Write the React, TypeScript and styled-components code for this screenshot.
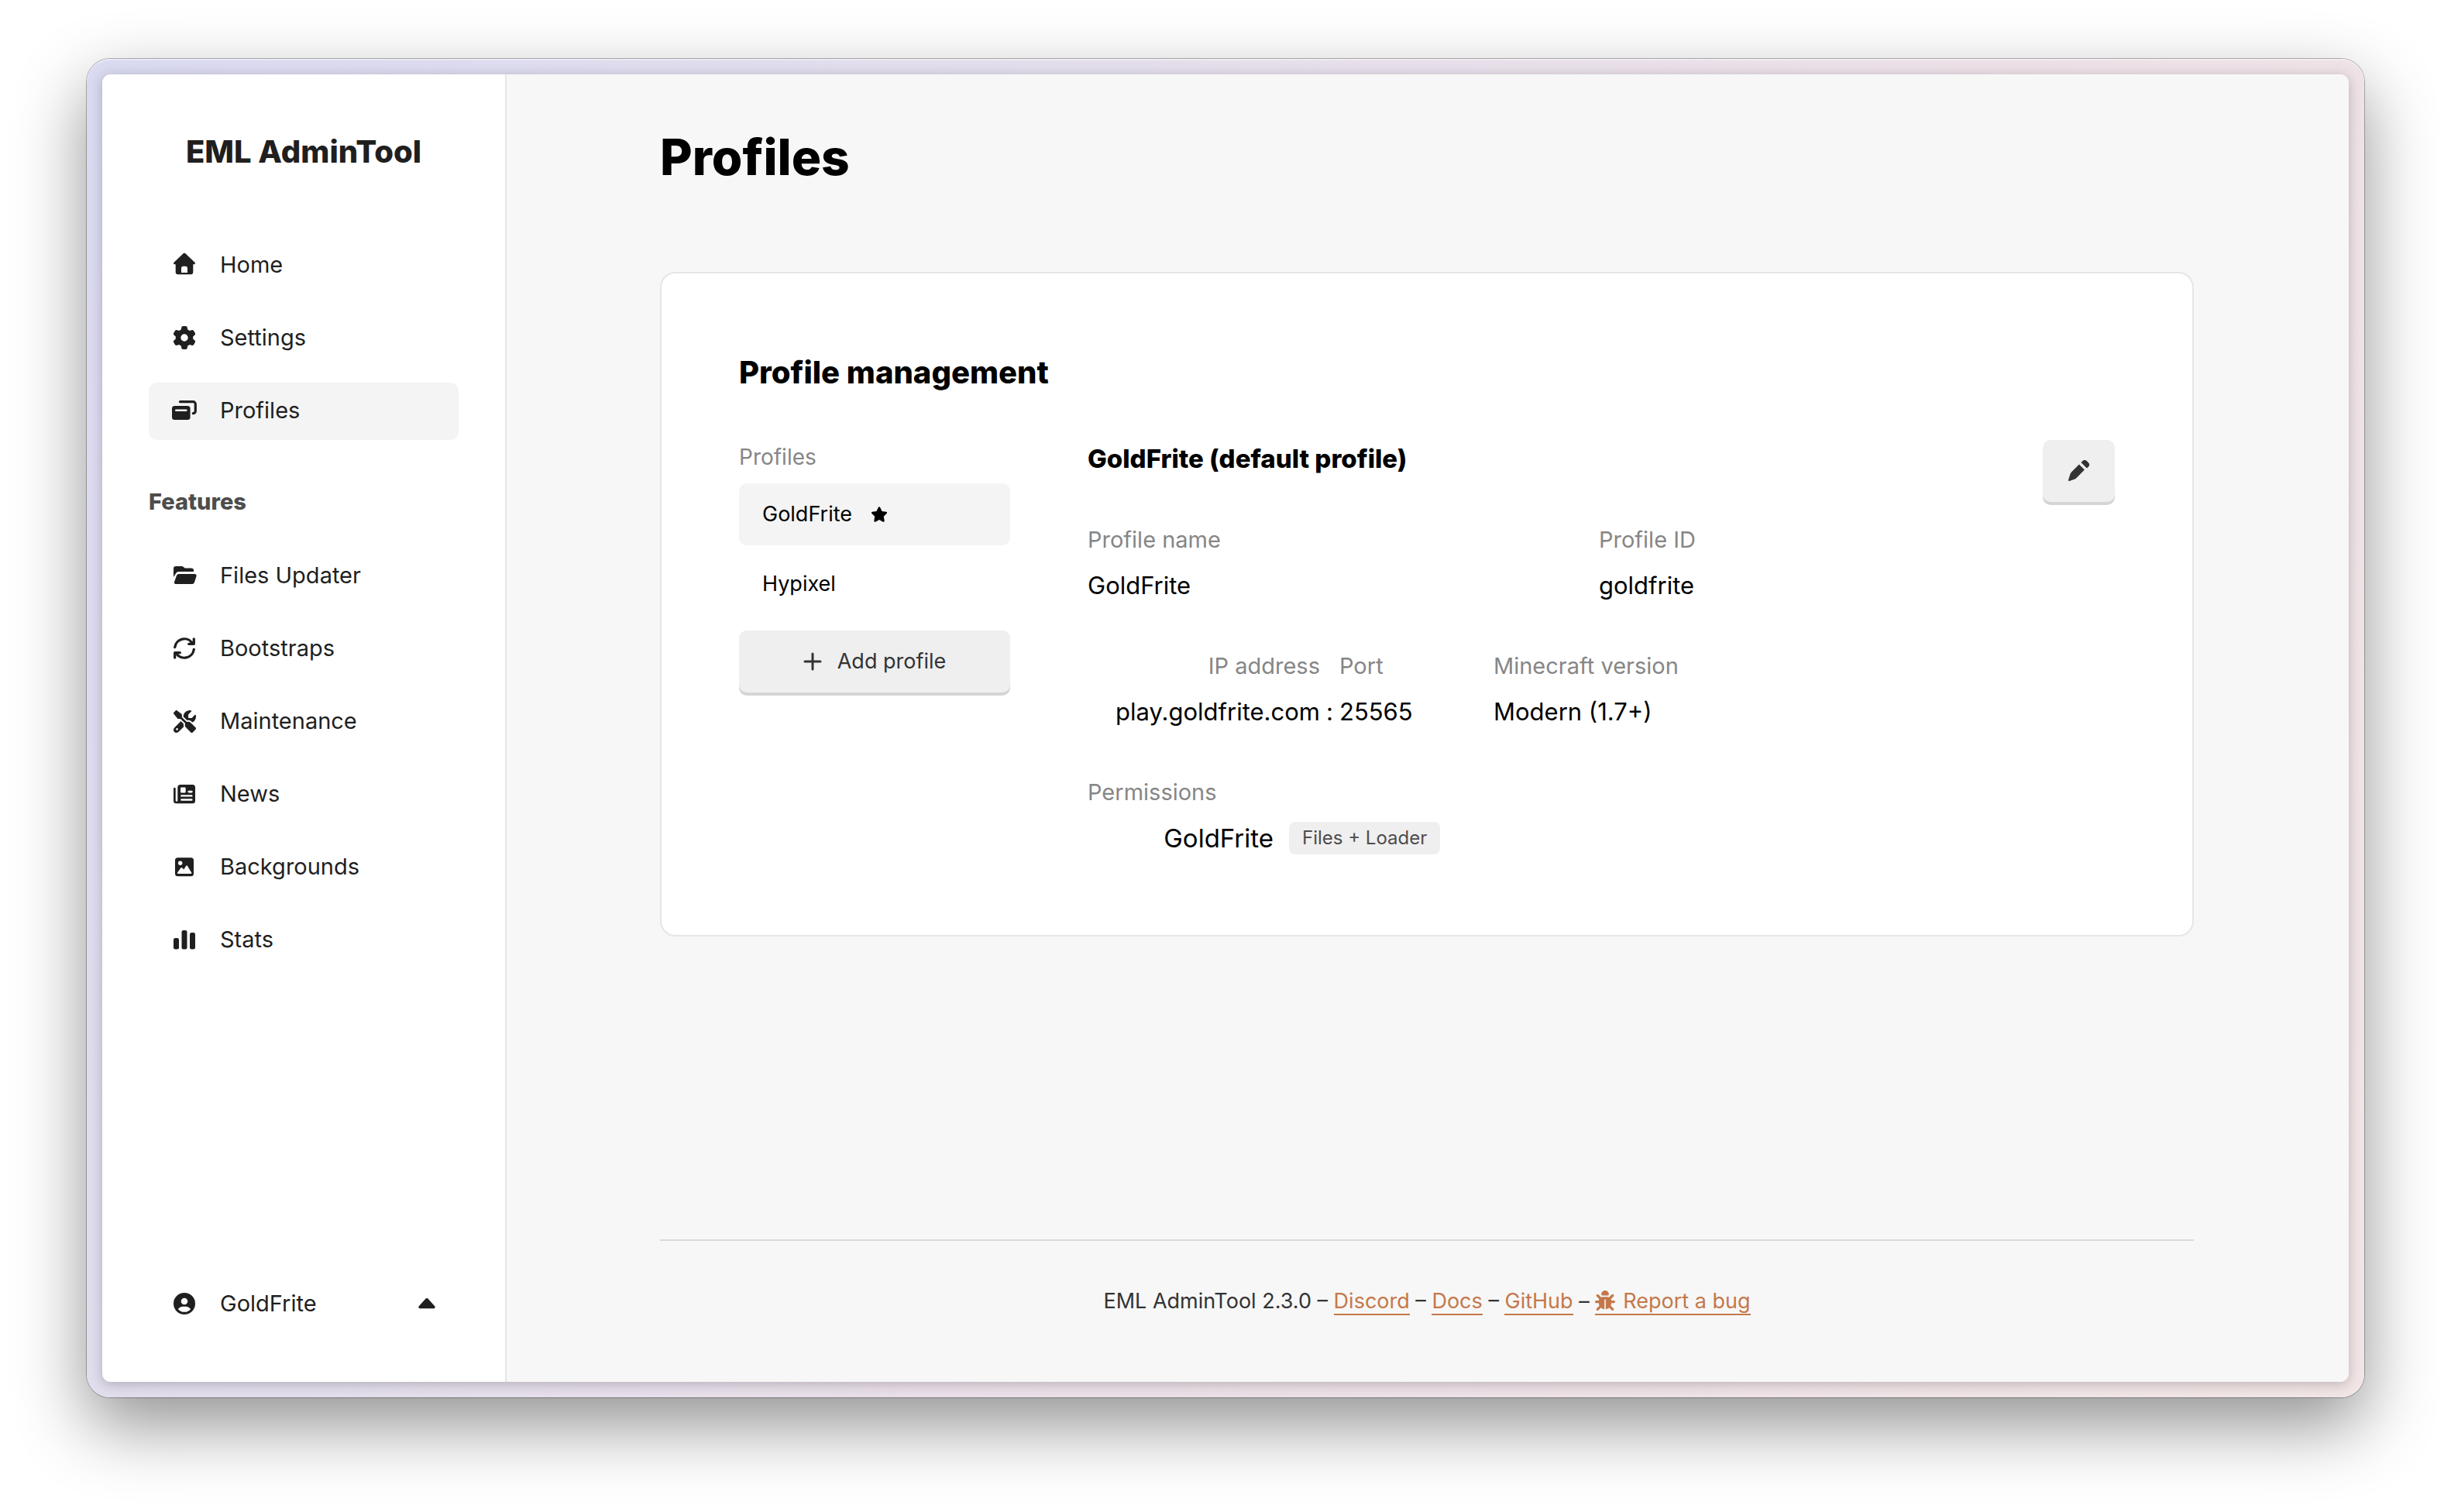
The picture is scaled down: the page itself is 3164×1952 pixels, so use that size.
import React from "react";
import styled, { createGlobalStyle } from "styled-components";
import { FaBug, FaGear, FaScrewdriverWrench, FaStar } from "react-icons/fa6";

const color = {
  ink: "#1f1f1f",
  black: "#000000",
  button: "#333333",
  section: "#4d4d4d",
  label: "#868686",
  line: "#e6e6e6",
  page: "#f7f7f7",
  soft: "#f4f4f4",
  fill: "#efefef",
  edge: "#d5d5d5",
  accent: "#c4784a",
};

const GlobalStyle = createGlobalStyle`
  *, *::before, *::after { box-sizing: border-box; }
  body {
    margin: 0;
    background: #ffffff;
    color: ${color.black};
    font-family: Inter, "Noto Sans", sans-serif;
    font-size: 29px;
    line-height: 44px;
  }
  h1, h2, h3, p, ul, dl, dd { margin: 0; padding: 0; }
  ul { list-style: none; }
  button { font: inherit; color: inherit; border: 0; padding: 0; cursor: pointer; }
  svg { display: block; flex: none; }
`;

const Desktop = styled.div`
  display: flex;
  min-height: 100vh;
  padding: 76px 112px 148px;
`;

const Frame = styled.div`
  display: flex;
  flex: 1;
  min-width: 0;
  padding: 20px;
  border-radius: 30px;
  background: linear-gradient(120deg, #d9d9f1 0%, #e3deec 32%, #ece0e8 60%, #f2e5e5 100%);
  box-shadow:
    inset 0 2px 1px rgba(255, 255, 255, 0.4),
    0 0 0 1px rgba(0, 0, 0, 0.28),
    0 36px 90px rgba(0, 0, 0, 0.43);
`;

const Window = styled.div`
  display: flex;
  flex: 1;
  min-width: 0;
  border-radius: 11px;
  box-shadow: 0 3px 16px rgba(0, 0, 0, 0.22);
`;

const Sidebar = styled.aside`
  display: flex;
  flex-direction: column;
  flex: none;
  width: 522px;
  padding: 70px 60px 64px;
  border-right: 2px solid ${color.line};
  border-radius: 11px 0 0 11px;
  background: #ffffff;
  color: ${color.ink};
`;

const Brand = styled.p`
  margin-bottom: 80px;
  font-size: 40px;
  font-weight: 800;
  line-height: 60px;
  text-align: center;
`;

const NavList = styled.ul`
  display: flex;
  flex-direction: column;
  gap: 20px;
`;

const NavLink = styled.a<{ $active?: boolean }>`
  display: flex;
  align-items: center;
  gap: 30px;
  height: 74px;
  padding: 0 28px 2px 30px;
  border-radius: 10px;
  background: ${(p) => (p.$active ? color.soft : "transparent")};
  color: inherit;
  text-decoration: none;
`;

const NavIcon = styled.span`
  display: flex;
  justify-content: center;
  width: 32px;
`;

const NavHeading = styled.h2`
  margin: 58px 0 37px;
  color: ${color.section};
  font-size: 29px;
  font-weight: 800;
`;

const UserButton = styled.button`
  display: flex;
  align-items: center;
  gap: 30px;
  height: 74px;
  margin-top: auto;
  padding: 0 30px;
  background: transparent;
  text-align: left;
`;

const UserName = styled.span`
  flex: 1;
`;

const Main = styled.main`
  display: flex;
  flex: 1;
  flex-direction: column;
  min-width: 0;
  padding: 59px 200px 84px 198px;
  border-radius: 0 11px 11px 0;
  background: ${color.page};
`;

const PageTitle = styled.h1`
  margin-bottom: 100px;
  font-size: 64px;
  font-weight: 800;
  line-height: 96px;
`;

const Card = styled.section`
  padding: 98px 100px 102px;
  border: 2px solid ${color.line};
  border-radius: 20px;
  background: #ffffff;
`;

const CardTitle = styled.h2`
  margin-bottom: 57px;
  font-size: 40px;
  font-weight: 800;
  line-height: 60px;
`;

const Columns = styled.div`
  display: grid;
  grid-template-columns: 350px 1fr auto;
  column-gap: 100px;
  align-items: start;
`;

const ListLabel = styled.h3`
  margin-bottom: 12px;
  color: ${color.label};
  font-size: 28px;
  font-weight: 400;
  line-height: 44px;
`;

const ProfileList = styled.ul`
  display: flex;
  flex-direction: column;
  gap: 10px;
  margin-bottom: 20px;
`;

const ProfileButton = styled.button<{ $active?: boolean }>`
  display: flex;
  align-items: center;
  gap: 24px;
  width: 100%;
  height: 80px;
  padding: 0 30px;
  border-radius: 10px;
  background: ${(p) => (p.$active ? color.soft : "transparent")};
  font-size: 27px;
`;

const ActionButton = styled.button`
  display: flex;
  align-items: center;
  justify-content: center;
  gap: 20px;
  height: 80px;
  border-radius: 10px;
  background: ${color.fill};
  box-shadow: 0 4px 0 ${color.edge};
  color: ${color.button};
  font-size: 27px;
`;

const AddButton = styled(ActionButton)`
  width: 100%;
`;

const EditButton = styled(ActionButton)`
  width: 93px;
`;

const Details = styled.div`
  display: flex;
  flex-direction: column;
  gap: 59px;
`;

const DetailsTitle = styled.h3`
  font-size: 33px;
  font-weight: 800;
  line-height: 48px;
`;

const FieldRow = styled.dl<{ $columns: string }>`
  display: grid;
  grid-template-columns: ${(p) => p.$columns};
`;

const Field = styled.div<{ $end?: boolean }>`
  display: flex;
  flex-direction: column;
  gap: 14px;
  text-align: ${(p) => (p.$end ? "right" : "left")};
  white-space: nowrap;
`;

const FieldLabel = styled.dt`
  color: ${color.label};
`;

const FieldValue = styled.dd`
  font-size: 31px;
  line-height: 46px;
`;

const Colon = styled(FieldValue)`
  align-self: end;
  text-align: center;
`;

const Permission = styled.dd`
  display: grid;
  grid-template-columns: 240px auto;
  justify-content: start;
  align-items: center;
  column-gap: 20px;
  font-size: 33px;
  line-height: 46px;
  text-align: right;
`;

const Badge = styled.span`
  padding: 0 17px;
  border-radius: 8px;
  background: ${color.fill};
  color: ${color.section};
  font-size: 24px;
  line-height: 42px;
`;

const Footer = styled.footer`
  margin-top: auto;
  padding-top: 58px;
  border-top: 2px solid #d9d9d9;
  color: ${color.button};
  font-size: 27px;
  line-height: 40px;
  text-align: center;
`;

const FooterLink = styled.a`
  border-bottom: 2px solid ${color.accent};
  color: ${color.accent};
  text-decoration: none;

  svg {
    display: inline-block;
    margin-right: 10px;
    vertical-align: -3px;
  }
`;

const Glyph = ({ children }: { children: React.ReactNode }) => (
  <svg width="32" height="32" viewBox="0 0 32 32" fill="currentColor" fillRule="evenodd" aria-hidden="true">
    {children}
  </svg>
);

const HouseIcon = () => (
  <Glyph>
    <path d="M14.9 1.1c.6-.6 1.6-.6 2.2 0l12.3 11.6c1.2 1.1.4 2.6-1 2.6h-1.1v10a3 3 0 0 1-3 3H7.7a3 3 0 0 1-3-3v-10H3.6c-1.4 0-2.2-1.5-1-2.6zM14.5 17.7a2.5 2.5 0 0 0-2.5 2.5V26h8v-5.8a2.5 2.5 0 0 0-2.5-2.5z" />
  </Glyph>
);

const ProfilesIcon = () => (
  <Glyph>
    <path d="M3.5 10h16.6a3.5 3.5 0 0 1 3.5 3.5v11a3.5 3.5 0 0 1-3.5 3.5H3.5A3.5 3.5 0 0 1 0 24.5v-11A3.5 3.5 0 0 1 3.5 10zM5.3 14.5a1.3 1.3 0 0 0 0 2.6h13a1.3 1.3 0 0 0 0-2.6z" />
    <path d="M10.5 4.7h16.8a3 3 0 0 1 3 3v9a3 3 0 0 1-3 3" fill="none" stroke="currentColor" strokeWidth="3.2" strokeLinecap="round" />
  </Glyph>
);

const FolderIcon = () => (
  <Glyph>
    <path d="M2 18V7a3 3 0 0 1 3-3h7.5c.9 0 1.7.3 2.4.9l1.2 1c.5.4 1.1.6 1.8.6h7.1a3 3 0 0 1 3 3v1.5H9.2a5 5 0 0 0-4.6 3z" />
    <path d="M8.9 14h20.5a2.2 2.2 0 0 1 2.1 2.9l-2.6 8a3 3 0 0 1-2.8 2.1H5a2.1 2.1 0 0 1-2-2.7l3-8.3a3 3 0 0 1 2.9-2z" />
  </Glyph>
);

const RotateIcon = () => (
  <Glyph>
    <g fill="none" stroke="currentColor" strokeWidth="3.3" strokeLinecap="round" strokeLinejoin="round">
      <path d="M3.7 14.6A12.4 12.4 0 0 1 26.5 9.6M28.3 3.9V10.3H21.7" />
      <path d="M28.3 17.4A12.4 12.4 0 0 1 5.5 22.4M3.7 28.1V21.7H10.3" />
    </g>
    <path d="M28 5.5V10H23.5zM4 26.5V22H8.5z" />
  </Glyph>
);

const NewsIcon = () => (
  <Glyph>
    <path d="M10.8 4h15.7A3.5 3.5 0 0 1 30 7.5v17.2a3.5 3.5 0 0 1-3.5 3.5H5.5A3.5 3.5 0 0 1 2 24.7V9a1.3 1.3 0 0 1 2.7 0v15.500a1.3 1.3 0 0 0 2.6 0v-17A3.5 3.5 0 0 1 10.8 4zM12.3 7.6a1.3 1.3 0 0 0-1.3 1.3v4.3c0 .7.6 1.3 1.3 1.3h4.1c.7 0 1.3-.6 1.3-1.3V8.900c0-.7-.6-1.3-1.3-1.3zM21.7 11.8a1.3 1.3 0 0 0 0 2.6h3.7a1.3 1.3 0 0 0 0-2.6zM12.3 17.2a1.2 1.2 0 0 0 0 2.4h13.1a1.2 1.2 0 0 0 0-2.4zM12.3 22.3a1.2 1.2 0 0 0 0 2.4h13.1a1.2 1.2 0 0 0 0-2.4z" />
  </Glyph>
);

const ImageIcon = () => (
  <Glyph>
    <path d="M7.5 4.3h17A3.5 3.5 0 0 1 28 7.8v17a3.5 3.5 0 0 1-3.5 3.5h-17A3.5 3.5 0 0 1 4 24.8v-17a3.5 3.5 0 0 1 3.5-3.5zM10.7 8.6a2.7 2.7 0 1 0 0 5.4 2.7 2.7 0 0 0 0-5.4zM7.8 25h16.6c.8 0 1.2-.8.8-1.5l-5.3-8.7c-.4-.7-1.3-.7-1.7 0l-2.9 4.7-2.3-2.2c-.5-.5-1.2-.5-1.6.1l-4.4 6.1c-.5.7 0 1.5.8 1.5z" />
  </Glyph>
);

const StatsIcon = () => (
  <Glyph>
    <rect x="2" y="14" width="7" height="14.5" rx="2.3" />
    <rect x="12.5" y="4" width="7" height="24.5" rx="2.3" />
    <rect x="23" y="7" width="7" height="21.5" rx="2.3" />
  </Glyph>
);

const UserIcon = () => (
  <Glyph>
    <path d="M16 2a14 14 0 1 1 0 28 14 14 0 0 1 0-28zM16 8.7a4.3 4.3 0 1 0 0 8.6 4.3 4.3 0 0 0 0-8.6zM7.9 23.2a10.9 10.9 0 0 0 16.2 0c-1.3-2.2-3.6-3.5-6.1-3.5h-4c-2.500 0-4.800 1.300-6.100 3.500z" />
  </Glyph>
);

const CaretUp = () => (
  <svg width="22" height="14" viewBox="0 0 22 14" fill="currentColor" aria-hidden="true">
    <path d="M9.6.6a2 2 0 0 1 2.800 0l8.800 9.700c1 1.200.3 2.900-1.300 2.900H2.100C.5 13.200-.2 11.500.8 10.300z" />
  </svg>
);

const PlusIcon = () => (
  <svg width="24" height="24" viewBox="0 0 24 24" fill="none" stroke="currentColor" strokeWidth="3" strokeLinecap="round" aria-hidden="true">
    <path d="M12 2v20M2 12h20" />
  </svg>
);

const PencilIcon = () => (
  <svg width="28" height="28" viewBox="0 0 28 28" fill="currentColor" aria-hidden="true">
    <path d="M13.9 5.4l7 7-10.1 10.4a6 6 0 0 1-2.4 1.6l-7 2.5c-.9.2-1.5-.4-1.3-1.3L2.5 18A6 6 0 0 1 4 15.4z" />
    <path d="M16.4 3l1.9-1.8a4 4 0 0 1 5.6 0l1.9 1.9a4 4 0 0 1 0 5.6l-1.9 1.9z" />
  </svg>
);

type LinkItem = { label: string; icon: React.ReactNode; active?: boolean };

const mainLinks: LinkItem[] = [
  { label: "Home", icon: <HouseIcon /> },
  { label: "Settings", icon: <FaGear size={30} /> },
  { label: "Profiles", icon: <ProfilesIcon />, active: true },
];

const featureLinks: LinkItem[] = [
  { label: "Files Updater", icon: <FolderIcon /> },
  { label: "Bootstraps", icon: <RotateIcon /> },
  { label: "Maintenance", icon: <FaScrewdriverWrench size={29} /> },
  { label: "News", icon: <NewsIcon /> },
  { label: "Backgrounds", icon: <ImageIcon /> },
  { label: "Stats", icon: <StatsIcon /> },
];

const Nav = ({ items }: { items: LinkItem[] }) => (
  <NavList>
    {items.map((item) => (
      <li key={item.label}>
        <NavLink href="#" $active={item.active} aria-current={item.active ? "page" : undefined}>
          <NavIcon>{item.icon}</NavIcon>
          {item.label}
        </NavLink>
      </li>
    ))}
  </NavList>
);

const Info = ({ label, value, end }: { label: string; value: string; end?: boolean }) => (
  <Field $end={end}>
    <FieldLabel>{label}</FieldLabel>
    <FieldValue>{value}</FieldValue>
  </Field>
);

export default function App() {
  return (
    <>
      <GlobalStyle />
      <Desktop>
        <Frame>
          <Window>
            <Sidebar>
              <Brand>EML AdminTool</Brand>
              <nav>
                <Nav items={mainLinks} />
                <NavHeading>Features</NavHeading>
                <Nav items={featureLinks} />
              </nav>
              <UserButton type="button">
                <UserIcon />
                <UserName>GoldFrite</UserName>
                <CaretUp />
              </UserButton>
            </Sidebar>

            <Main>
              <PageTitle>Profiles</PageTitle>
              <Card>
                <CardTitle>Profile management</CardTitle>
                <Columns>
                  <div>
                    <ListLabel>Profiles</ListLabel>
                    <ProfileList>
                      <li>
                        <ProfileButton type="button" $active>
                          GoldFrite
                          <FaStar size={22} />
                        </ProfileButton>
                      </li>
                      <li>
                        <ProfileButton type="button">Hypixel</ProfileButton>
                      </li>
                    </ProfileList>
                    <AddButton type="button">
                      <PlusIcon />
                      Add profile
                    </AddButton>
                  </div>

                  <Details>
                    <DetailsTitle>GoldFrite (default profile)</DetailsTitle>
                    <FieldRow $columns="660px 1fr">
                      <Info label="Profile name" value="GoldFrite" />
                      <Info label="Profile ID" value="goldfrite" />
                    </FieldRow>
                    <FieldRow $columns="300px 25px 199px 1fr">
                      <Info label="IP address" value="play.goldfrite.com" end />
                      <Colon as="span">:</Colon>
                      <Info label="Port" value="25565" />
                      <Info label="Minecraft version" value="Modern (1.7+)" />
                    </FieldRow>
                    <FieldRow $columns="1fr">
                      <Field>
                        <FieldLabel>Permissions</FieldLabel>
                        <Permission>
                          GoldFrite
                          <Badge>Files + Loader</Badge>
                        </Permission>
                      </Field>
                    </FieldRow>
                  </Details>

                  <EditButton type="button" aria-label="Edit profile">
                    <PencilIcon />
                  </EditButton>
                </Columns>
              </Card>

              <Footer>
                EML AdminTool 2.3.0 – <FooterLink href="#">Discord</FooterLink> –{" "}
                <FooterLink href="#">Docs</FooterLink> – <FooterLink href="#">GitHub</FooterLink> –{" "}
                <FooterLink href="#">
                  <FaBug size={26} />
                  Report a bug
                </FooterLink>
              </Footer>
            </Main>
          </Window>
        </Frame>
      </Desktop>
    </>
  );
}
